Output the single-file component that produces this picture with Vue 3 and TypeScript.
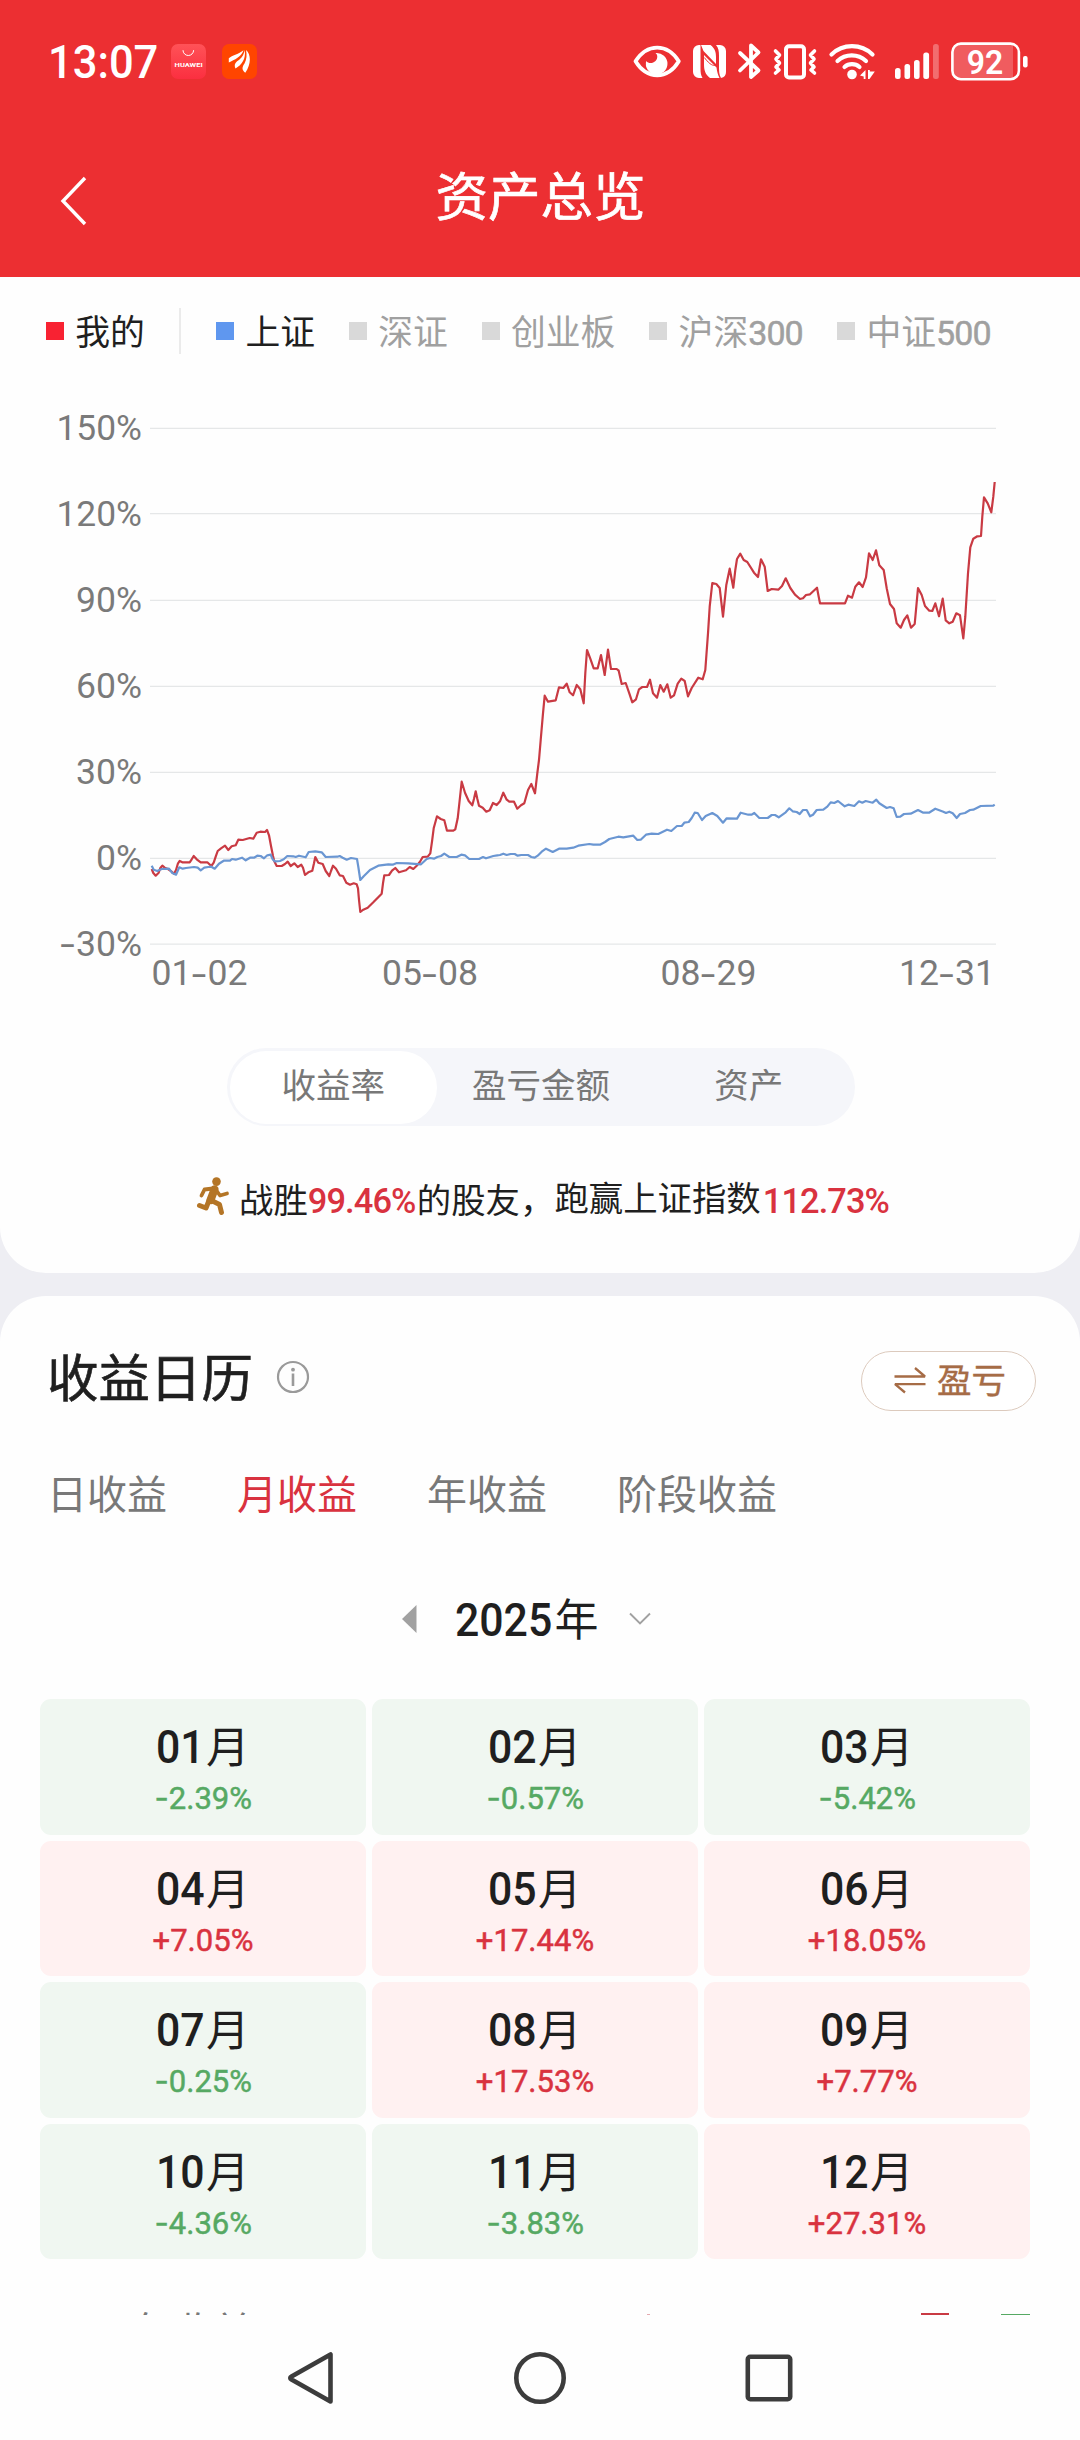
<script setup lang="ts">
type Pt = [number, number]

interface Legend {
  label: string
  digits?: string
  color: string
  active: boolean
}

interface Month {
  month: string
  value: string
}

const mine: Legend = { label: '我的', color: '#f82232', active: true }
const indexes: Legend[] = [
  { label: '上证', color: '#5f97ef', active: true },
  { label: '深证', color: '#d9d9d9', active: false },
  { label: '创业板', color: '#d9d9d9', active: false },
  { label: '沪深', digits: '300', color: '#d9d9d9', active: false },
  { label: '中证', digits: '500', color: '#d9d9d9', active: false },
]

// Curves are stored in thirds of a pixel, in two panels that are joined here.
const parse = (src: string, dx: number, dy: number): Pt[] =>
  src.trim().split(/\s+/).map((p) => {
    const [x, y] = p.split(',').map(Number)
    return [x + dx, y + dy] as Pt
  })

const toPoints = (pts: Pt[]): string =>
  pts.map(([x, y]) => `${(40 + x / 3).toFixed(1)},${(460 + y / 3).toFixed(1)}`).join(' ')

const mineCurve = toPoints([
  ...parse(
    `335,447 340,459 347,467 356,458 361,444 367,437 374,443 384,447 394,454 402,461 408,450 414,430 419,423
     427,427 449,427 455,418 461,408 470,418 482,427 502,427 514,438 521,428 527,410 533,393 543,385 555,377
     565,390 575,379 587,376 595,359 608,360 629,354 640,356 650,338 661,335 675,336 681,330 687,346 693,378
     699,408 703,424 710,438 725,438 735,432 743,425 752,438 763,430 773,441 784,434 789,443 795,465 805,457
     817,452 822,430 826,411 835,428 848,432 857,453 868,468 873,453 879,437 888,446 899,466 909,468 919,488
     930,494 941,490 950,493 954,505 957,540 961,576 970,569 983,563 1000,547 1025,521 1029,490 1033,466
     1047,465 1056,452 1066,444 1077,457 1098,451 1109,441 1120,447 1130,437 1140,425 1148,411 1163,410
     1171,400 1176,365 1181,325 1191,289 1202,297 1213,301 1221,332 1240,332 1246,328 1253,295 1259,240
     1265,185 1275,218 1286,243 1297,256 1302,236 1307,214 1312,236 1317,257 1328,263 1339,275 1349,271
     1359,249 1370,255 1380,244 1390,218 1400,239 1408,245 1422,245 1432,266 1443,256 1453,250 1464,210
     1474,192 1485,220 1492,160`,
    0,
    780,
  ),
  ...parse(
    `117,900 122,840 129,760 134,707 144,725 167,721 177,682 190,684 200,671 209,697 219,706 230,675 241,688
     251,730 256,640 261,570 271,596 281,625 293,625 303,585 314,645 324,569 333,627 350,627 356,632 365,672
     377,669 388,700 397,727 408,718 417,688 427,681 441,681 450,659 459,700 471,713 481,675 491,695 502,673
     512,713 522,706 533,671 544,656 554,663 564,709 575,684 595,653 608,658 616,630 624,520 629,440 637,369
     649,372 659,384 669,470 679,375 689,326 700,383 706,330 711,297 721,281 731,300 742,306 762,338 774,351
     783,298 794,320 803,393 815,387 835,389 846,378 857,355 871,384 885,404 900,417 909,415 918,405 930,403
     951,383 956,410 960,430 1035,430 1044,407 1056,413 1066,380 1077,367 1088,381 1098,352 1107,280
     1118,300 1128,271 1138,316 1151,330 1160,385 1170,432 1182,447 1190,490 1202,503 1212,480 1222,466
     1233,503 1244,492 1249,440 1254,384 1265,405 1275,438 1288,452 1297,453 1306,430 1317,469 1328,416
     1337,481 1348,490 1358,485 1369,460 1380,466 1390,535 1396,470 1404,340 1411,262 1420,236 1432,229
     1443,228 1447,170 1452,112 1463,130 1474,157 1480,110 1484,66`,
    1380,
    0,
  ),
])

const indexCurve = toPoints([
  ...parse(
    `335,437 341,449 352,453 365,447 387,446 397,459 408,464 418,442 428,446 438,444 462,441 473,443 482,451
     493,443 505,441 514,440 524,446 537,431 551,422 570,422 576,417 587,419 606,413 617,421 630,413 642,413
     652,407 662,408 672,415 682,406 692,404 698,418 705,424 720,423 731,418 742,408 760,409 767,411 777,407
     797,412 806,396 826,394 845,397 857,411 892,410 899,408 908,413 920,419 933,414 951,417 955,440 961,480
     971,469 990,450 1015,437 1045,433 1058,434 1070,429 1105,430 1143,433 1160,417 1170,414 1182,416
     1192,411 1203,408 1213,401 1228,411 1250,411 1264,404 1275,406 1288,417 1317,417 1329,411 1338,415
     1360,408 1372,406`,
    0,
    780,
  ),
  ...parse(
    `0,345 10,341 20,345 32,342 44,342 53,347 64,345 84,345 94,351 104,353 113,347 125,335 138,326 158,336
     177,326 200,326 220,323 235,317 268,312 280,314 300,314 315,306 328,297 355,290 370,292 400,287 412,300
     422,299 438,284 455,281 475,282 501,269 514,273 531,258 545,258 553,248 566,246 575,234 584,218 593,219
     606,240 617,228 637,219 652,228 669,248 680,235 711,236 722,218 745,224 755,224 763,219 778,234 803,234
     815,225 825,225 836,232 857,217 868,205 878,214 890,216 899,222 909,210 920,210 930,229 939,224 950,210
     970,209 982,200 992,187 1003,189 1014,183 1034,199 1045,194 1063,198 1077,184 1087,188 1097,183
     1118,188 1129,179 1138,190 1160,204 1170,201 1181,205 1190,231 1201,230 1212,222 1232,221 1254,210
     1270,218 1287,218 1306,206 1330,215 1338,219 1348,215 1358,220 1370,234 1380,222 1395,219 1410,210
     1420,209 1442,198 1480,197 1484,194`,
    1380,
    840,
  ),
])

const yAxis = [
  { label: '150%', y: 428.3, w: 85.5 },
  { label: '120%', y: 513.7, w: 85.5 },
  { label: '90%', y: 600.3, w: 66 },
  { label: '60%', y: 686.3, w: 66 },
  { label: '30%', y: 772.3, w: 66 },
  { label: '0%', y: 858.3, w: 46 },
  { label: '-30%', y: 944.2, w: 66 },
]

const xAxis = [
  { a: '01', b: '02', x: 151.5 },
  { a: '05', b: '08', x: 382 },
  { a: '08', b: '29', x: 660.5 },
  { a: '12', b: '31', x: 899 },
]

const modes = ['收益率', '盈亏金额', '资产']
const tabs = ['日收益', '月收益', '年收益', '阶段收益']

const months: Month[] = [
  { month: '01', value: '-2.39%' },
  { month: '02', value: '-0.57%' },
  { month: '03', value: '-5.42%' },
  { month: '04', value: '+7.05%' },
  { month: '05', value: '+17.44%' },
  { month: '06', value: '+18.05%' },
  { month: '07', value: '-0.25%' },
  { month: '08', value: '+17.53%' },
  { month: '09', value: '+7.77%' },
  { month: '10', value: '-4.36%' },
  { month: '11', value: '-3.83%' },
  { month: '12', value: '+27.31%' },
]
</script>

<template>
  <div class="screen">
    <header class="top">
      <div class="status">
        <span class="clock">13:07</span>
        <svg class="app-icon" width="35" height="35" viewBox="0 0 35 35">
          <defs>
            <linearGradient id="store" x1="0" y1="0" x2="0" y2="1">
              <stop offset="0" stop-color="#ff5257" />
              <stop offset="1" stop-color="#fb2f40" />
            </linearGradient>
          </defs>
          <rect width="35" height="35" rx="7" fill="url(#store)" />
          <path d="M12 6.2a5.3 5.3 0 0 0 10.6 0" fill="none" stroke="#fff" stroke-width="1" />
          <text x="3.6" y="22.6" font-size="6.2" font-weight="700" fill="#fff" textLength="28" lengthAdjust="spacingAndGlyphs">HUAWEI</text>
        </svg>
        <svg class="app-icon second" width="35" height="35" viewBox="0 0 35 35">
          <rect width="35" height="35" rx="7" fill="#ff4500" />
          <g fill="#fff">
            <path d="M6.8 18.5V14.3C10.5 10.8 15.5 11 21.5 6.2C19.5 13 12.500 15.500 6.800 18.500Z" />
            <path d="M13.500 24.500C11.500 20 14 18 17.500 15.500C20.500 13 22.200 9.500 22.700 6C24.200 15 19.500 21 13.500 24.500Z" />
            <path d="M24 6C29 10 29.500 20 23.300 28.700C19.500 26 20 23 22.500 19.500C24.800 15.500 25 10.500 24 6Z" />
          </g>
        </svg>
        <svg class="sys-icons" width="400" height="48" viewBox="630 36 400 48">
          <g fill="none" stroke="#fff" stroke-linejoin="round" stroke-linecap="round">
            <path d="M635.500 60.300C647 42 667.500 42 678.800 60.300C667.500 79 647 79 635.500 60.300Z" stroke-width="3.800" />
          </g>
          <path d="M655.500 52A10.800 10.800 0 1 1 646.200 60C648.500 63 653 62.500 655.500 60C658 57.500 657.800 53.500 655.500 52Z" fill="#fff" />
          <path d="M700 44h-1a6 6 0 0 0-6 6v21a6 6 0 0 0 6 6h3.500c-1.500-2.500-2-5-2-9.500V44.200zM701 44h9.500c4.500 3.500 5.500 7 5.500 12v7l-12.500-13zM704 54l12.500 12.500c.5 4 1.500 7.500 3 10.500h-9.500c-5-4-6-8-6-14zM716 44h4a6 6 0 0 1 6 6v21a6 6 0 0 1-5 6c-2-3-2-7-2-13v-9c0-5-.5-8-3-11z" fill="#fff" />
          <path d="M704.300 56.500c6 8 9 8 11 8" fill="none" stroke="#ec2f32" stroke-width="1" />
          <path d="M740 52L758.500 69.500L751 76V44.500L758.500 51.500L740 69.500" fill="none" stroke="#fff" stroke-width="3.800" stroke-linejoin="round" stroke-linecap="round" />
          <rect x="786" y="45.200" width="18" height="31.200" rx="3" fill="none" stroke="#fff" stroke-width="4" />
          <path d="M775.500 50l4 4-3.500 4 3.500 4-3.500 4 3 3-3.500 3M814.500 50l-4 4 3.500 4-3.500 4 3.500 4-3 3 3.500 3" fill="none" stroke="#fff" stroke-width="3.600" stroke-linejoin="round" stroke-linecap="round" />
          <g fill="none" stroke="#fff" stroke-width="4.200" stroke-linecap="round">
            <path d="M831.500 53.500A29.500 29.500 0 0 1 872.500 53.500" />
            <path d="M837.500 60A21 21 0 0 1 866 60" />
            <path d="M844.500 66A11.500 11.500 0 0 1 859.500 66" />
          </g>
          <circle cx="852" cy="73.500" r="4.800" fill="#fff" />
          <path d="M860 74.500l5.500-5.500V78h-1.800V75.500zM868 78V69h1.800v1.500l5 0-5.300 7.500z" fill="#fff" />
          <g fill="#fff">
            <rect x="895" y="67" width="5.600" height="11" rx="2.500" />
            <rect x="904.500" y="63" width="5.600" height="15" rx="2.500" />
            <rect x="914" y="59" width="5.600" height="19" rx="2.500" />
            <rect x="923.300" y="51.500" width="5.800" height="26.500" rx="2.500" />
            <rect x="933" y="43" width="5.800" height="35" rx="2.500" fill-opacity=".3" />
            <rect x="1023" y="55" width="4.600" height="11.500" rx="2" />
          </g>
          <path d="M960 44h53v33h-53a7 7 0 0 1-7-7V51a7 7 0 0 1 7-7z" fill="#fff" fill-opacity=".22" />
          <rect x="952.400" y="42.600" width="66.500" height="35.600" rx="8.500" fill="none" stroke="#fff" stroke-width="2.600" />
          <text x="966.800" y="73" font-size="33" font-weight="600" fill="#fff" textLength="36.500" lengthAdjust="spacingAndGlyphs">92</text>
        </svg>
      </div>
      <div class="nav">
        <svg class="back" width="30" height="52" viewBox="0 0 30 52">
          <path d="M26 3L4 26L26 49" fill="none" stroke="#fff" stroke-width="3.400" />
        </svg>
        <h1>资产总览</h1>
      </div>
    </header>

    <section class="card overview">
      <div class="legend">
        <span class="key">
          <i :style="{ background: mine.color }"></i><em>{{ mine.label }}</em>
        </span>
        <span class="divider"></span>
        <span v-for="item in indexes" :key="item.label" class="key" :class="{ off: !item.active }">
          <i :style="{ background: item.color }"></i><em>{{ item.label }}</em><b v-if="item.digits">{{ item.digits }}</b>
        </span>
      </div>

      <svg class="chart" width="1080" height="620" viewBox="0 400 1080 620">
        <g stroke="#e5e7e8" stroke-width="1.300">
          <line v-for="t in yAxis" :key="t.label" x1="150" x2="996" :y1="t.y" :y2="t.y" />
        </g>
        <g fill="#7a7a7a" font-size="35.500">
          <text
            v-for="t in yAxis"
            :key="t.label"
            :x="142 - t.w"
            :y="t.y + 11.800"
            :textLength="t.w"
            lengthAdjust="spacingAndGlyphs"
          >{{ t.label.replace('-', '') }}</text>
          <text class="dash" x="58.500" y="957" textLength="18" lengthAdjust="spacingAndGlyphs">-</text>
          <template v-for="t in xAxis" :key="t.a">
            <text :x="t.x" y="985.400" textLength="40" lengthAdjust="spacingAndGlyphs">{{ t.a }}</text>
            <text class="dash" :x="t.x + 38.500" y="986.500" textLength="18" lengthAdjust="spacingAndGlyphs">-</text>
            <text :x="t.x + 56" y="985.400" textLength="40" lengthAdjust="spacingAndGlyphs">{{ t.b }}</text>
          </template>
        </g>
        <polyline :points="mineCurve" fill="none" stroke="#c93a43" stroke-width="2.200" stroke-linejoin="round" />
        <polyline :points="indexCurve" fill="none" stroke="#6a96d2" stroke-width="2.200" stroke-linejoin="round" />
      </svg>

      <div class="modes">
        <span v-for="(m, i) in modes" :key="m" :class="{ on: i === 0 }">{{ m }}</span>
      </div>

      <p class="beat">
        <svg width="34" height="38" viewBox="0 0 34 38">
          <circle cx="20.500" cy="4.600" r="4.300" fill="#b47526" />
          <g fill="none" stroke="#b47526" stroke-linejoin="round" stroke-linecap="round">
            <path d="M18.500 12.500L14.500 23" stroke-width="8" />
            <path d="M17 11.500L8.500 12.500L5.500 18.500" stroke-width="3.800" />
            <path d="M20 13L24 18.500L31 16.500" stroke-width="3.800" />
            <path d="M15.500 23.500L23.500 27.500L25.500 35.500" stroke-width="5" />
            <path d="M13 23.500L10 31L3.500 28.500" stroke-width="5" />
          </g>
        </svg>
        <span class="low">战胜</span><b class="pct-a">99.46%</b><span class="low">的股友，</span><span>跑赢上证指数</span><b class="pct-b">112.73%</b>
      </p>
    </section>

    <section class="card calendar">
      <div class="head">
        <h2>收益日历</h2>
        <svg class="info" width="34" height="34" viewBox="0 0 34 34">
          <circle cx="17" cy="17" r="15" fill="none" stroke="#9a9a9a" stroke-width="2.200" />
          <path d="M17 13.500V26" stroke="#9a9a9a" stroke-width="2.600" />
          <circle cx="17" cy="9.700" r="1.900" fill="#9a9a9a" />
        </svg>
        <button class="toggle">
          <svg width="34" height="28" viewBox="0 0 34 28">
            <path d="M1.500 10.500H32L22 2M32.500 18.200H2L12 26.500" fill="none" stroke="#a66c46" stroke-width="2.300" stroke-linejoin="bevel" />
          </svg>
          盈亏
        </button>
      </div>

      <nav class="tabs">
        <span v-for="(t, i) in tabs" :key="t" :class="{ on: i === 1 }">{{ t }}</span>
      </nav>

      <div class="year">
        <svg width="15" height="28" viewBox="0 0 15 28"><path d="M14.500 0V28L0 14Z" fill="#a1a1a1" /></svg>
        <span class="label"><b>2025</b>年</span>
        <svg width="22" height="14" viewBox="0 0 22 14">
          <path d="M1 1.500L11 11.500L21 1.500" fill="none" stroke="#a1a1a1" stroke-width="1.900" />
        </svg>
      </div>

      <div class="grid">
        <div v-for="m in months" :key="m.month" class="cell" :class="m.value[0] === '-' ? 'down' : 'up'">
          <span class="m"><b>{{ m.month }}</b>月</span>
          <span class="v"><i>{{ m.value[0] }}</i>{{ m.value.slice(1) }}</span>
        </div>
      </div>

      <div class="peek">
        <span class="peek-label">年收益</span>
        <i class="speck"></i>
        <i class="bar red"></i>
        <i class="bar green"></i>
      </div>
    </section>

    <footer class="sysnav">
      <svg width="48" height="56" viewBox="0 0 48 56">
        <path d="M43.500 4.500V51.500L4.500 29.500Q2 28 4.500 26.500Z" fill="none" stroke="#3c3c3c" stroke-width="4.600" stroke-linejoin="round" />
      </svg>
      <svg width="54" height="54" viewBox="0 0 54 54">
        <circle cx="27" cy="27" r="23.700" fill="none" stroke="#3c3c3c" stroke-width="4.600" />
      </svg>
      <svg width="48" height="48" viewBox="0 0 48 48">
        <rect x="2.800" y="2.800" width="42.400" height="42.400" rx="2.500" fill="none" stroke="#3c3c3c" stroke-width="4.600" />
      </svg>
    </footer>
  </div>
</template>

<style>
body {
  margin: 0;
  background: #eeeef3;
}
</style>

<style scoped>
.screen {
  width: 1080px;
  height: 2440px;
  overflow: hidden;
  display: flex;
  flex-direction: column;
  background: #eeeef3;
  color: #1f1f1f;
  font-family: Roboto, 'Noto Sans CJK SC', sans-serif;
}
svg {
  display: block;
  flex: none;
}
h1,
h2,
p {
  margin: 0;
  font-weight: 400;
}
i,
em {
  font-style: normal;
}
.top {
  flex: none;
  height: 277px;
  background: #ec2f32;
  color: #fff;
}
.status {
  height: 122px;
  display: flex;
  align-items: center;
  padding-left: 48px;
}
.clock {
  width: 123px;
  font-size: 46.500px;
  font-weight: 500;
  line-height: 60px;
  padding-top: 2px;
  box-sizing: border-box;
  transform: scaleX(0.935);
  transform-origin: 0 50%;
}
.app-icon.second {
  margin-left: 16px;
}
.sys-icons {
  margin-left: 373px;
}
.nav {
  position: relative;
  height: 155px;
}
.back {
  position: absolute;
  left: 59px;
  top: 53px;
}
h1 {
  text-align: center;
  font-size: 52.500px;
  line-height: 78px;
  padding: 37px 0 0 1px;
  -webkit-text-stroke: 0.700px currentColor;
}
.card {
  flex: none;
  background: #fefefe;
  box-sizing: border-box;
}
.overview {
  height: 996px;
  border-radius: 0 0 46px 46px;
}
.legend {
  display: flex;
  align-items: center;
  height: 46px;
  padding: 31px 0 0 46px;
  font-size: 34.800px;
  line-height: 46px;
}
.key {
  display: flex;
  align-items: center;
  margin-right: 33.900px;
  white-space: nowrap;
}
.key i {
  width: 18px;
  height: 18px;
  margin-right: 11.300px;
}
.key em,
.key b {
  padding-top: 3px;
}
.key b {
  font-weight: 400;
  font-size: 34px;
  width: 55px;
  letter-spacing: -0.900px;
  -webkit-text-stroke: 0.500px currentColor;
}
.key.off {
  color: #a0a0a0;
}
.divider {
  width: 2px;
  height: 46px;
  margin: 0 35.300px 0 0;
  background: #ebebeb;
}
.chart {
  margin-top: 46px;
}
.dash {
  font-family: Inter, sans-serif;
}
.modes {
  display: flex;
  width: 623px;
  height: 73px;
  margin: 28px 0 0 227px;
  padding: 2.500px;
  border-radius: 39px;
  background: #f5f6fa;
}
.modes span {
  flex: 1;
  border-radius: 37px;
  text-align: center;
  font-size: 34.500px;
  line-height: 70px;
  color: #787878;
}
.modes .on {
  background: #fff;
}
.beat {
  display: flex;
  align-items: center;
  height: 50px;
  margin: 49px 0 0 196px;
  font-size: 34.400px;
  line-height: 50px;
  white-space: nowrap;
}
.beat svg {
  margin: -8px 9px 0 0;
}
.beat span {
  margin-top: -2px;
}
.beat .low {
  padding-top: 3px;
}
.beat b {
  padding-top: 2px;
  font-weight: 500;
  color: #d9323f;
}
.pct-a {
  width: 109px;
  letter-spacing: -0.900px;
}
.pct-b {
  width: 126px;
  padding-left: 2px;
  letter-spacing: -0.900px;
}
.calendar {
  flex: 1;
  display: flex;
  flex-direction: column;
  margin-top: 23px;
  border-radius: 46px 46px 0 0;
  overflow: hidden;
}
.head {
  flex: none;
  display: flex;
  align-items: center;
  height: 60px;
  margin: 55px 44px 0 47px;
}
h2 {
  font-size: 51.500px;
  line-height: 60px;
  margin-top: -2px;
  -webkit-text-stroke: 0.600px currentColor;
}
.info {
  margin: -8px 0 0 22.500px;
}
.toggle {
  display: flex;
  align-items: center;
  box-sizing: border-box;
  width: 175px;
  height: 60px;
  margin-left: auto;
  padding: 0 0 6px 31px;
  border: 1px solid #dccabd;
  border-radius: 30px;
  background: #fff;
  color: #a66c46;
  font: inherit;
  font-size: 34.500px;
  -webkit-text-stroke: 0.400px currentColor;
}
.toggle svg {
  margin: 4px 10px 0 0;
}
.tabs {
  flex: none;
  display: flex;
  gap: 70px;
  margin: 55px 0 0 47px;
  font-size: 40px;
  line-height: 60px;
  color: #787878;
}
.tabs .on {
  color: #d9323f;
}
.year {
  flex: none;
  display: flex;
  align-items: center;
  height: 60px;
  margin: 63px 0 0 402px;
}
.label {
  width: 143px;
  margin: 0 30.500px 0 38px;
  font-size: 44px;
  line-height: 60px;
  padding-top: 4px;
  white-space: nowrap;
}
.label b,
.m b {
  display: inline-block;
  font-size: 45.500px;
  font-weight: 500;
  transform: scaleX(0.94);
  transform-origin: 0 50%;
}
.label b {
  margin-right: -4px;
}
.m b {
  margin-right: -2px;
}
.grid {
  flex: none;
  display: grid;
  grid-template-columns: repeat(3, 326px);
  grid-auto-rows: 135.500px;
  gap: 6px;
  margin: 50px 0 0 40px;
}
.cell {
  display: flex;
  flex-direction: column;
  align-items: center;
  box-sizing: border-box;
  padding-top: 19px;
  border-radius: 11px;
}
.cell.down {
  background: #f0f7f1;
}
.cell.up {
  background: #fff1f1;
}
.m {
  font-size: 43.500px;
  line-height: 60px;
}
.v {
  font-size: 32px;
  line-height: 40px;
  margin-top: -1px;
  transform: scaleX(0.97);
  -webkit-text-stroke: 0.500px currentColor;
}
.down .v {
  color: #56a963;
}
.up .v {
  color: #d9323f;
}
.down .v i {
  font-family: Inter, sans-serif;
}
.peek {
  flex: none;
  display: flex;
  align-items: flex-start;
  height: 16px;
  margin-top: 40px;
  overflow: hidden;
  padding-left: 133.500px;
  color: #787878;
}
.peek-label {
  font-size: 40px;
  line-height: 60px;
  margin-top: 4px;
}
.speck {
  width: 3px;
  height: 1px;
  margin: 15px 0 0 393px;
  background: #e6aab0;
}
.bar {
  height: 3px;
}
.bar.red {
  width: 28px;
  margin: 14px 0 0 271px;
  background: #c93a43;
}
.bar.green {
  width: 29px;
  margin: 15px 0 0 52px;
  background: #56a963;
}
.sysnav {
  flex: none;
  display: flex;
  align-items: center;
  height: 124px;
  padding-left: 287px;
  background: #fefefe;
}
.sysnav svg:nth-child(2) {
  margin: 0 178px;
}
</style>
